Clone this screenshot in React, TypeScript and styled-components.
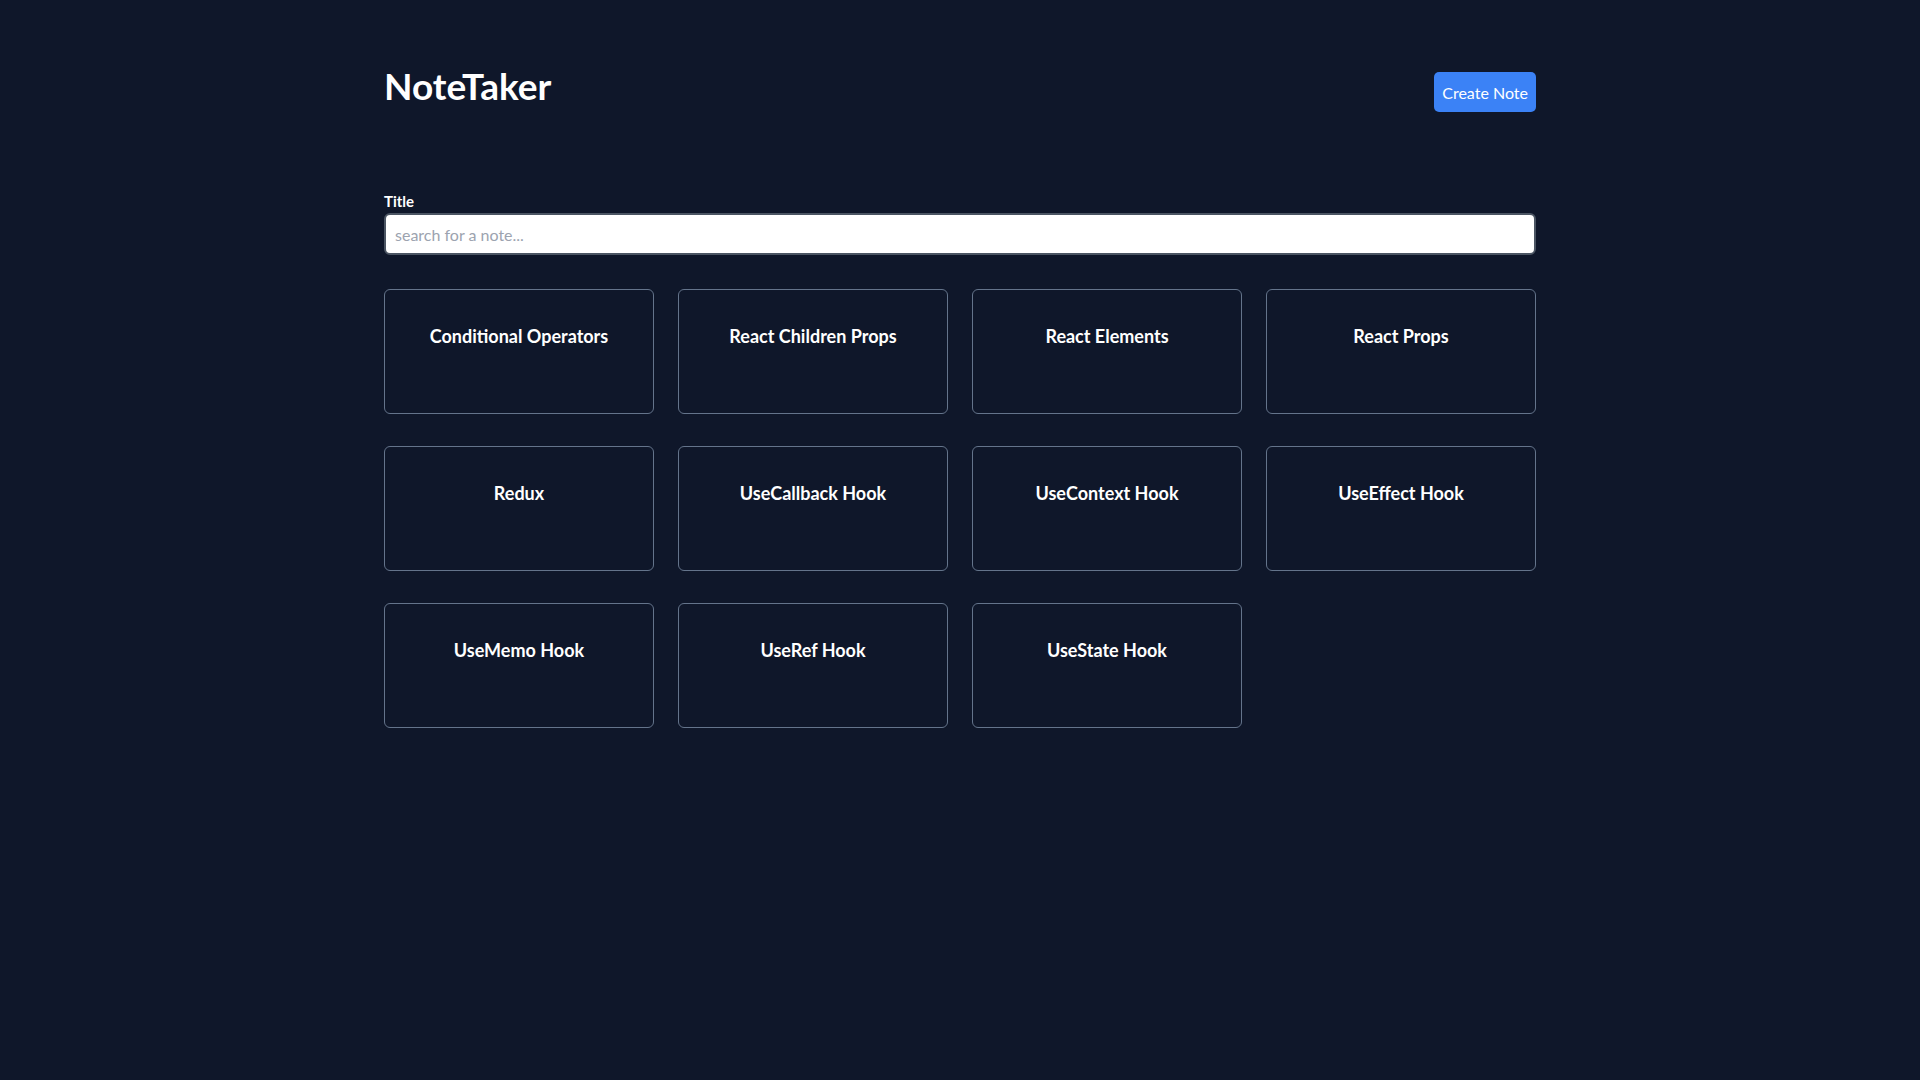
import React from "react";
import styled, { createGlobalStyle } from "styled-components";

const GlobalStyle = createGlobalStyle`
  html, body {
    margin: 0;
    padding: 0;
    background: #0f172a;
    min-height: 100vh;
  }
  body {
    font-family: "Lato", "Noto Sans", sans-serif;
    color: #f8fafc;
  }
  * { box-sizing: border-box; }
`;

const Page = styled.main`
  width: 1152px;
  margin: 0 auto;
  padding-top: 64px;
`;

const Header = styled.header`
  display: flex;
  justify-content: space-between;
  align-items: flex-start;
`;

const Heading = styled.h1`
  margin: 0;
  font-size: 37px;
  line-height: 44px;
  font-weight: 700;
  color: #ffffff;
`;

const CreateButton = styled.button`
  margin-top: 8px;
  height: 40px;
  padding: 0 8px;
  border: none;
  border-radius: 5px;
  background: #3b82f6;
  color: #ffffff;
  font-family: inherit;
  font-size: 16px;
  cursor: pointer;
`;

const SearchField = styled.div`
  margin-top: 79px;
  display: flex;
  flex-direction: column;
  gap: 2px;
`;

const Label = styled.label`
  font-size: 15px;
  line-height: 20px;
  font-weight: 700;
  color: #ffffff;
`;

const SearchInput = styled.input`
  width: 100%;
  height: 42px;
  padding: 0 9px;
  border: 2px solid #4b5563;
  border-radius: 6px;
  background: #ffffff;
  color: #111827;
  font-family: inherit;
  font-size: 16px;
  outline: none;
  &::placeholder {
    color: #9ca3af;
  }
`;

const Grid = styled.section`
  margin-top: 34px;
  display: grid;
  grid-template-columns: repeat(4, 1fr);
  column-gap: 24px;
  row-gap: 32px;
`;

const Card = styled.article`
  height: 125px;
  padding-top: 32px;
  border: 1px solid #64748b;
  border-radius: 6px;
  background: #0f172a;
  text-align: center;
  cursor: pointer;
`;

const CardTitle = styled.h2`
  margin: 0;
  font-size: 18px;
  line-height: 28px;
  font-weight: 700;
  color: #ffffff;
`;

const notes = [
  "Conditional Operators",
  "React Children Props",
  "React Elements",
  "React Props",
  "Redux",
  "UseCallback Hook",
  "UseContext Hook",
  "UseEffect Hook",
  "UseMemo Hook",
  "UseRef Hook",
  "UseState Hook",
];

export default function App() {
  return (
    <>
      <GlobalStyle />
      <Page>
        <Header>
          <Heading>NoteTaker</Heading>
          <CreateButton>Create Note</CreateButton>
        </Header>
        <SearchField>
          <Label htmlFor="search">Title</Label>
          <SearchInput id="search" type="text" placeholder="search for a note..." />
        </SearchField>
        <Grid>
          {notes.map((n) => (
            <Card key={n}>
              <CardTitle>{n}</CardTitle>
            </Card>
          ))}
        </Grid>
      </Page>
    </>
  );
}
